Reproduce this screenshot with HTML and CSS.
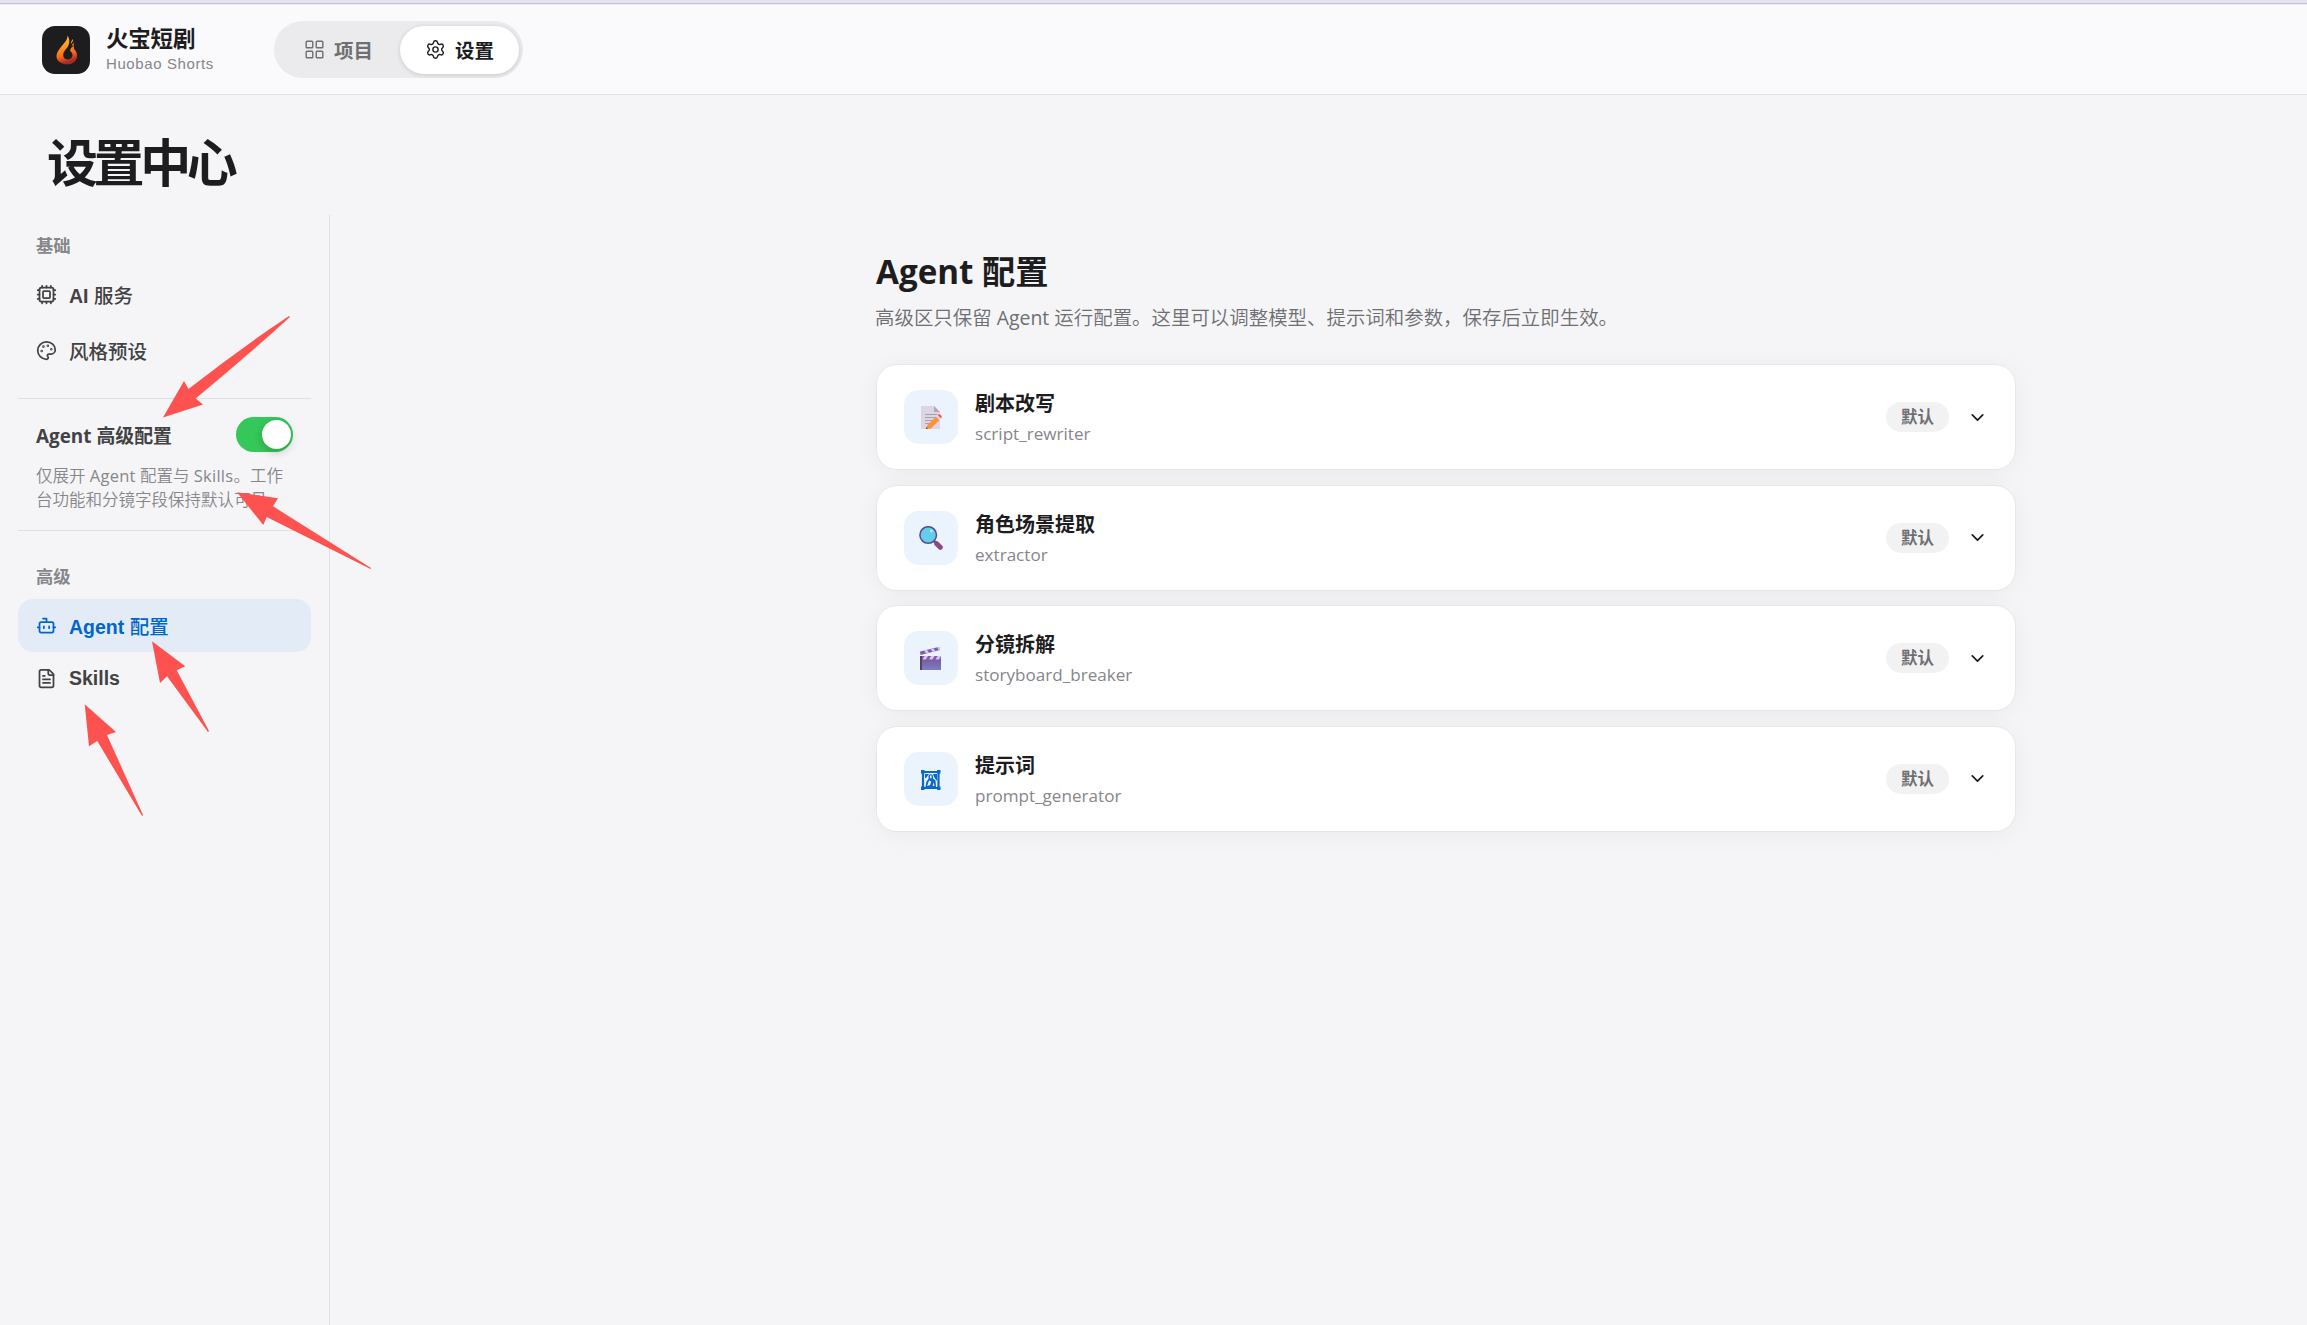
FILE: index.html
```html
<!DOCTYPE html>
<html lang="zh-CN">
<head>
    <meta charset="UTF-8">
    <meta name="viewport" content="width=device-width, initial-scale=1.0">
    <title>火宝短剧 - 设置中心</title>
    <link rel="stylesheet" href="styles.css">
</head>
<body>
    <div class="top-strip"></div>
    <header class="topbar">
        <div class="logo">
            <svg width="48" height="48" viewBox="0 0 48 48">
                <defs>
                    <linearGradient id="flame" x1="0" y1="0" x2="0.25" y2="1">
                        <stop offset="0" stop-color="#ffc637"/>
                        <stop offset="0.45" stop-color="#ff9a1c"/>
                        <stop offset="0.75" stop-color="#f9641b"/>
                        <stop offset="1" stop-color="#a92a22"/>
                    </linearGradient>
                </defs>
                <path fill="url(#flame)" d="M25.500 9.500c.3 5-4.500 8.500-8 13.500-3.500 4.500-4.200 9-.5 12.500 4.300 4 12.800 3.800 16.500-.8 2.800-4 2-8.200-1.500-12l-.2-2.700c-2.300 1-3.800 2.700-3.600 5 2.800 2.300 3.200 5.500.6 7.500-2.500 1.800-6.300 1-7.300-1.800-1-3 .5-5.500 2.800-8C27.500 19.500 28.500 14 25.500 9.500z"/>
                <path fill="#ffa52a" d="M31 13c.5 2-.8 3-2.200 5 .3-2 .6-3.500 2.200-5z"/>
                <path fill="#f5811f" d="M29.500 19.500 32 16.500 31.500 20z"/>
            </svg>
        </div>
        <div class="brand">
            <div class="brand-name">火宝短剧</div>
            <div class="brand-sub">Huobao Shorts</div>
        </div>
        <nav class="tabs">
            <a class="tab">
                <svg class="icon" width="21" height="21" viewBox="0 0 24 24"><rect x="2.500" y="2.500" width="7.500" height="7.500" rx="1"/><rect x="14" y="2.500" width="7.500" height="7.500" rx="1"/><rect x="14" y="14" width="7.500" height="7.500" rx="1"/><rect x="2.500" y="14" width="7.500" height="7.500" rx="1"/></svg>
                <span>项目</span>
            </a>
            <a class="tab active">
                <svg class="icon" width="21" height="21" viewBox="0 0 24 24"><path d="M9.671 4.136a2.340 2.340 0 0 1 4.659 0 2.340 2.340 0 0 0 3.319 1.915 2.340 2.340 0 0 1 2.330 4.033 2.340 2.340 0 0 0 0 3.831 2.340 2.340 0 0 1-2.330 4.033 2.340 2.340 0 0 0-3.319 1.915 2.340 2.340 0 0 1-4.659 0 2.340 2.340 0 0 0-3.320-1.915 2.340 2.340 0 0 1-2.330-4.033 2.340 2.340 0 0 0 0-3.831A2.340 2.340 0 0 1 6.350 6.051a2.340 2.340 0 0 0 3.319-1.915"/><circle cx="12" cy="12" r="3"/></svg>
                <span>设置</span>
            </a>
        </nav>
    </header>

    <h1 class="page-title">设置中心</h1>

    <div class="layout">
        <aside class="sidebar">
            <div class="side-label">基础</div>
            <a class="side-item">
                <svg class="icon" width="21" height="21" viewBox="0 0 24 24"><path d="M12 20v2M12 2v2M17 20v2M17 2v2M2 12h2M2 17h2M2 7h2M20 12h2M20 17h2M20 7h2M7 20v2M7 2v2"/><rect x="4" y="4" width="16" height="16" rx="2"/><rect x="8" y="8" width="8" height="8" rx="1"/></svg>
                <span><b>AI</b> 服务</span>
            </a>
            <a class="side-item second">
                <svg class="icon" width="21" height="21" viewBox="0 0 24 24"><path d="M12 22a1 1 0 0 1 0-20 10 9 0 0 1 10 9 5 5 0 0 1-5 5h-2.250a1.750 1.750 0 0 0-1.400 2.800l.3.4a1.750 1.750 0 0 1-1.400 2.800z"/><circle cx="13.500" cy="6.500" r=".5"/><circle cx="17.500" cy="10.500" r=".5"/><circle cx="6.500" cy="12.500" r=".5"/><circle cx="8.500" cy="7.500" r=".5"/></svg>
                <span>风格预设</span>
            </a>

            <div class="advanced">
                <div class="advanced-row">
                    <span class="advanced-title">Agent 高级配置</span>
                    <span class="switch"></span>
                </div>
                <p class="advanced-desc">仅展开 <span class="latin">Agent</span> 配置与 <span class="latin">Skills</span>。工作<br>台功能和分镜字段保持默认可见。</p>
            </div>

            <div class="side-label">高级</div>
            <a class="side-item active">
                <svg class="icon" width="21" height="21" viewBox="0 0 24 24"><path d="M12 8V4H8"/><rect x="4" y="8" width="16" height="12" rx="2"/><path d="M2 14h2M20 14h2M15 13v2M9 13v2"/></svg>
                <span><b>Agent</b> 配置</span>
            </a>
            <a class="side-item">
                <svg class="icon" width="21" height="21" viewBox="0 0 24 24"><path d="M15 2H6a2 2 0 0 0-2 2v16a2 2 0 0 0 2 2h12a2 2 0 0 0 2-2V7z"/><path d="M14 2v4a2 2 0 0 0 2 2h4M10 9H8M16 13H8M16 17H8"/></svg>
                <span><b>Skills</b></span>
            </a>
        </aside>

        <main class="content">
            <h2 class="section-title">Agent 配置</h2>
            <p class="section-desc">高级区只保留 <span class="latin">Agent</span> 运行配置。这里可以调整模型、提示词和参数，保存后立即生效。</p>

            <div class="agent-list">
                <div class="agent-card">
                    <div class="agent-icon">
                        <svg width="24" height="24" viewBox="0 0 24 24">
                            <path fill="#dcd5e3" d="M2 1h13l6 6v17H2z"/>
                            <path fill="#b3a5bd" d="M15 1l6 6h-6z"/>
                            <path stroke="#a99eb2" stroke-width="1" d="M6 9.500h12M6 12.500h12M6 15.500h10M6 18.500h6"/>
                            <path fill="#ff9232" d="M8.500 20 17 11.500l3.500 3.500-8.500 8.500-5 .5z"/>
                            <path fill="#e4e0ea" d="M17 11.500l1.500-1.500 3.500 3.500-1.500 1.500z"/>
                            <path fill="#f4595c" d="M18.500 10c1-1.200 2.400-.8 3.400.1 1 1 1.300 2.300.1 3.400z"/>
                            <path fill="#6b4038" d="M7.500 22l1.500 1.600-2.200.4z"/>
                        </svg>
                    </div>
                    <div class="agent-info">
                        <div class="agent-name">剧本改写</div>
                        <div class="agent-key">script_rewriter</div>
                    </div>
                    <span class="badge">默认</span>
                    <svg class="chevron" width="21" height="21" viewBox="0 0 24 24"><path d="m6 9 6 6 6-6"/></svg>
                </div>

                <div class="agent-card">
                    <div class="agent-icon">
                        <svg width="24" height="24" viewBox="0 0 24 24">
                            <path stroke="#75466f" stroke-width="2.500" d="M15 15l3 3"/>
                            <path stroke="#8b4a86" stroke-width="5" stroke-linecap="round" d="M17.700 17.700l3.600 3.600"/>
                            <circle cx="9.200" cy="9" r="8.300" fill="#62ceea" stroke="#5a4b8c" stroke-width="1.500"/>
                            <circle cx="12.500" cy="5" r="1.400" fill="#b5edfb"/>
                        </svg>
                    </div>
                    <div class="agent-info">
                        <div class="agent-name">角色场景提取</div>
                        <div class="agent-key">extractor</div>
                    </div>
                    <span class="badge">默认</span>
                    <svg class="chevron" width="21" height="21" viewBox="0 0 24 24"><path d="m6 9 6 6 6-6"/></svg>
                </div>

                <div class="agent-card">
                    <div class="agent-icon">
                        <svg width="24" height="24" viewBox="0 0 24 24">
                            <defs>
                                <linearGradient id="clap" x1="0" y1="0" x2="0" y2="1">
                                    <stop offset="0" stop-color="#785188"/>
                                    <stop offset="1" stop-color="#7d7dc8"/>
                                </linearGradient>
                            </defs>
                            <path fill="#835ba9" d="M1 5.500 19.500 1q2 .5 1.500 3L1.500 9z"/>
                            <path fill="#d0c7f6" d="M5 4.600l3-.8 2 3-3 .8zM11.500 3l3-.8 2 3-3 .8zM18 1.300l2-.3 1.200 2.800-1.400.5z"/>
                            <path fill="url(#clap)" d="M1 10h21v14H1z"/>
                            <path fill="#835ba9" d="M3 10h19v3.500H3z"/>
                            <path fill="#d0c7f6" d="M5.500 10h3.500l-2 3.500H3.500zM12 10h3.500l-2 3.500H10zM18.500 10H22l-2 3.500h-3.500z"/>
                            <path fill="#57405f" d="M1 10h2v14H1z"/>
                        </svg>
                    </div>
                    <div class="agent-info">
                        <div class="agent-name">分镜拆解</div>
                        <div class="agent-key">storyboard_breaker</div>
                    </div>
                    <span class="badge">默认</span>
                    <svg class="chevron" width="21" height="21" viewBox="0 0 24 24"><path d="m6 9 6 6 6-6"/></svg>
                </div>

                <div class="agent-card">
                    <div class="agent-icon">
                        <svg width="24" height="24" viewBox="0 0 24 24">
                            <path fill="none" stroke="#0868cc" stroke-width="2.200" d="M4 5h15.500v16H4z"/>
                            <path fill="#0868cc" d="M2 3h3.500v3.500H2zM18 3h3.500v3.500H18zM2 19.500h3.500V23H2zM18 19.500h3.500V23H18z"/>
                            <path fill="#0868cc" d="M6 7h4L7 11H6zM14 7h4v7l-3-4z"/>
                            <path fill="#0868cc" d="M9.500 9.500c0-3 4.500-3 4.500 0v2l2.500 2 .5 6.500H6.500l1-5.500 2-2.500z"/>
                            <path fill="#ebf3fd" d="M11 8.500h1.600v2.700H11zM10 13.500l2.200.8-1 3.700-3 1zM14.500 15l1 4h-1.800z"/>
                        </svg>
                    </div>
                    <div class="agent-info">
                        <div class="agent-name">提示词</div>
                        <div class="agent-key">prompt_generator</div>
                    </div>
                    <span class="badge">默认</span>
                    <svg class="chevron" width="21" height="21" viewBox="0 0 24 24"><path d="m6 9 6 6 6-6"/></svg>
                </div>
            </div>
        </main>
    </div>

    <!-- Guide arrows over the sidebar -->
    <svg class="arrows" width="400" height="840" viewBox="0 0 400 840">
        <path d="M163 417.500 184 381 188.500 389Q238 350 289 316L290 317Q246 357 195.700 398.500L203 404.500z"/>
        <path d="M237 492.300 278 498.300 273 506.300 371 568 370.500 569 266.700 517 263.300 525z"/>
        <path d="M152 641.300 185.300 666.300 176.700 670.300 209 731 208 732 167 676.300 160 683z"/>
        <path d="M84.700 704.300 116 732 107 735 143 815 142 816 97.300 741 89 746.300z"/>
    </svg>
</body>
</html>
```

FILE: styles.css
```css
* {
    box-sizing: border-box;
}
body {
    margin: 0;
    height: 1325px;
    display: flex;
    flex-direction: column;
    overflow: hidden;
    position: relative;
    background: #f5f5f7;
    color: #1d1d1f;
    font-family: "Liberation Sans", "Noto Sans CJK SC", sans-serif;
}
h1, h2, p {
    margin: 0;
}
.icon, .chevron {
    fill: none;
    stroke: currentColor;
    stroke-width: 2;
    stroke-linecap: round;
    stroke-linejoin: round;
    flex: none;
}
.tab .icon {
    stroke-width: 1.6;
}

/* Header */
.top-strip {
    height: 5px;
    flex: none;
    background: #e4e4ef;
    border-bottom: 1px solid #ececf5;
    box-shadow: inset 0 -1px 0 #c5c5d2;
}
.topbar {
    height: 90px;
    flex: none;
    display: flex;
    align-items: center;
    padding: 0 42px;
    background: #fafafc;
    border-bottom: 1px solid #e2e2e5;
}
.logo {
    width: 48px;
    height: 48px;
    border-radius: 13px;
    background: #1d1d1f;
}
.logo svg {
    display: block;
}
.brand {
    width: 122px;
    margin-left: 16px;
    white-space: nowrap;
}
.brand-name {
    font-size: 22.5px;
    font-weight: 700;
    line-height: 27px;
    letter-spacing: -0.2px;
}
.brand-sub {
    margin-top: 2px;
    font-size: 15px;
    line-height: 18px;
    letter-spacing: 0.6px;
    color: #86868b;
}
.tabs {
    display: flex;
    align-items: center;
    height: 57px;
    width: 249px;
    margin-left: 46px;
    padding: 0 4px;
    border-radius: 29px;
    background: #ebebed;
}
.tab {
    display: flex;
    align-items: center;
    gap: 9px;
    height: 48px;
    width: 122px;
    padding-left: 26px;
    border-radius: 24px;
    font-size: 19.5px;
    font-weight: 700;
    color: #6e6e73;
}
.tab.active {
    width: 119px;
    padding-left: 25px;
    background: #fff;
    color: #1d1d1f;
    box-shadow: 0 1px 5px rgba(0,0,0,0.14);
}

.page-title {
    flex: none;
    height: 120px;
    padding: 32px 0 0 47px;
    font-size: 51px;
    line-height: 76px;
    font-weight: 700;
    letter-spacing: -4.4px;
}
.layout {
    flex: 1;
    display: flex;
}

/* Sidebar */
.sidebar {
    width: 330px;
    flex: none;
    padding: 19px 18px 0;
    border-right: 1px solid #dfdfe2;
}
.side-label {
    padding-left: 18px;
    font-size: 17.3px;
    font-weight: 700;
    line-height: 25px;
    color: #86868b;
}
.side-item {
    display: flex;
    align-items: center;
    gap: 12px;
    height: 52px;
    padding-left: 18px;
    border-radius: 15px;
    font-size: 19.5px;
    font-weight: 500;
    color: #424245;
}
.side-label + .side-item {
    margin-top: 9px;
}
.side-item.second {
    margin-top: 4px;
}
.side-item.active {
    height: 53px;
    background: #e3ebf7;
    color: #0066cc;
}
.advanced {
    height: 133px;
    margin: 22px 0 34px;
    padding: 18px;
    border-top: 1px solid #dfdfe2;
    border-bottom: 1px solid #dfdfe2;
}
.advanced-row {
    display: flex;
    justify-content: space-between;
    align-items: center;
    height: 35px;
}
.advanced-title {
    font-family: "Open Sans", "Noto Sans CJK SC", sans-serif;
    font-size: 18.9px;
    font-weight: 700;
    color: #424245;
}
.switch {
    width: 57px;
    height: 35px;
    padding: 3px 2px;
    display: flex;
    justify-content: flex-end;
    border-radius: 18px;
    background: #34c759;
}
.switch::after {
    content: "";
    width: 29px;
    height: 29px;
    border-radius: 50%;
    background: #fff;
    box-shadow: 0 3px 8px rgba(0,0,0,0.2);
}
.advanced-desc {
    margin-top: 12px;
    font-family: "Open Sans", "Noto Sans CJK SC", sans-serif;
    font-size: 16.5px;
    font-weight: 350;
    line-height: 24px;
    color: #86868b;
    white-space: nowrap;
}
.latin {
    font-weight: 400;
}
.advanced-desc .latin {
    letter-spacing: 0.25px;
}

/* Agent settings */
.content {
    width: 1138px;
    margin-left: 547px;
    padding-top: 34px;
    font-family: "Open Sans", "Noto Sans CJK SC", sans-serif;
}
.section-title {
    margin-left: -1px;
    font-size: 33.2px;
    line-height: 46px;
    font-weight: 700;
}
.section-desc {
    margin: 8px 0 0 -2px;
    font-size: 19.45px;
    line-height: 30px;
    font-weight: 350;
    color: #6e6e73;
    white-space: nowrap;
}
.agent-list {
    display: flex;
    flex-direction: column;
    gap: 16.5px;
    margin-top: 32px;
}
.agent-card {
    display: flex;
    align-items: center;
    height: 104px;
    padding: 0 27px;
    border-radius: 20px;
    background: #fff;
    box-shadow: 0 0 0 1px rgba(0,0,0,0.03), 0 3px 24px rgba(0,0,0,0.05);
}
.agent-icon {
    width: 54px;
    height: 54px;
    display: flex;
    align-items: center;
    justify-content: center;
    border-radius: 15px;
    background: #ebf3fd;
}
.agent-icon svg {
    fill: none;
}
.agent-info {
    flex: 1;
    margin-left: 17px;
    padding-top: 2px;
}
.agent-name {
    font-size: 20px;
    font-weight: 700;
    line-height: 30px;
}
.agent-key {
    margin-top: 2px;
    font-size: 17.1px;
    line-height: 26px;
    color: #86868b;
}
.badge {
    width: 63px;
    margin-right: 18px;
    border-radius: 15px;
    background: #f2f2f2;
    color: #6e6e73;
    font-size: 16.5px;
    font-weight: 700;
    line-height: 30px;
    text-align: center;
}

.arrows {
    position: absolute;
    left: 0;
    top: 0;
    fill: #fd5250;
    pointer-events: none;
}
```
